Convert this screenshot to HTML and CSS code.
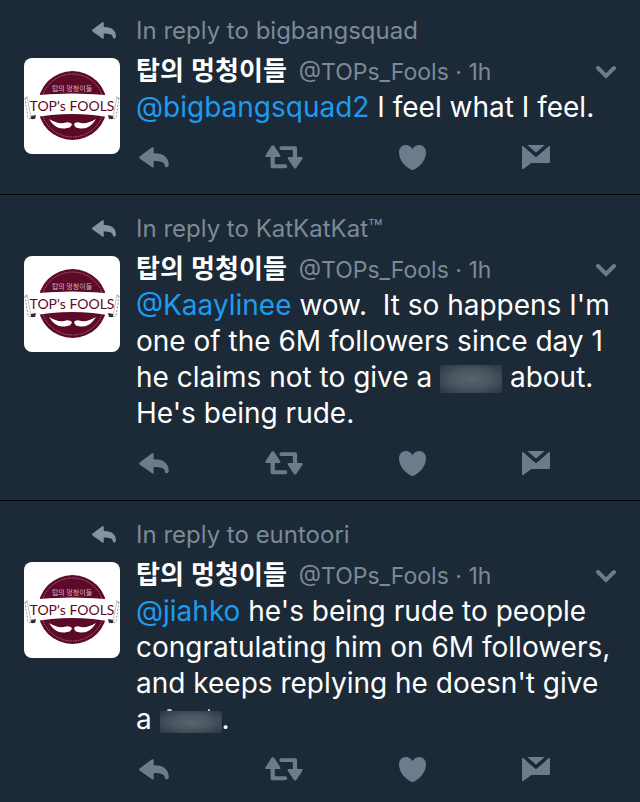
FILE: index.html
```html
<!doctype html>
<html lang="en">
  <head>
    <meta charset="UTF-8" />
    <meta name="viewport" content="width=device-width, initial-scale=1.0" />
    <title>Tweets</title>
    <link rel="stylesheet" href="styles.css">
  </head>
  <body>
    <svg class="sprite" aria-hidden="true">
      <symbol id="reply" viewBox="0 0 90 64">
        <path d="M2 28 39 1Q44-1 44 4V19C74 18 90 32 90 55Q90 62 84 62Q78 62 78 56C77 46 65 43 44 43V60Q44 65 39 62L2 36Q-2 32 2 28Z" />
      </symbol>
      <symbol id="retweet" viewBox="0 0 116 72">
        <path d="M20 2Q24-2 28 2L46 30Q49 36 43 36H30V58H62Q68 58 68 64T62 70H22Q17 70 17 65V36H5Q-1 36 2 30Z" />
        <path d="M50 3H92Q98 3 98 9V36H111Q117 36 114 42L96 69Q92 74 88 69L70 42Q67 36 73 36H85V15H50Q44 15 44 9T50 3Z" />
      </symbol>
      <symbol id="heart" viewBox="0 0 80 74">
        <path d="M40 12C45 3 52 0 60 0C72 0 80 10 80 22C80 45 60 66 44 73Q40 75 36 73C20 66 0 45 0 22C0 10 8 0 20 0C28 0 35 3 40 12Z" />
      </symbol>
      <symbol id="message" viewBox="0 0 84 72">
        <path d="M16 0H68L45 20Q42 23 39 20Z" />
        <path d="M0 4Q0 0 4 4L38 34Q42 38 46 34L80 4Q84 0 84 4V50Q84 54 80 54H28L5 71Q0 74 0 69Z" />
      </symbol>
      <symbol id="chevron" viewBox="0 0 20 14">
        <path class="stroke" d="M2 3 10 11 18 3" />
      </symbol>
      <symbol id="logo" viewBox="0 0 96 96">
        <rect width="96" height="96" fill="#fff" />
        <circle cx="48.500" cy="47.500" r="34.500" fill="#5d0928" />
        <circle cx="48.500" cy="47.500" r="31.500" fill="none" stroke="#c497a8" stroke-width="0.700" stroke-dasharray="1.500 1" />
        <text class="logo-small" x="48" y="33" text-anchor="middle">탑의 멍청이들</text>
        <path d="M1 40 8 39 9 61 4 60Z M95 40 88 39 87 61 92 60Z" fill="#fff" stroke="#777" stroke-width="0.800" stroke-dasharray="2 1.500" />
        <path d="M3 38Q48 33 93 38L89 60Q48 52 7 60Z" fill="#fff" />
        <path d="M3 38 7 60M93 38 89 60" stroke="#aaa" stroke-width="0.700" />
        <path d="M7 58 12 57 11 61 7 61ZM89 58 84 57 85 61 89 61Z" fill="#302b30" />
        <text class="logo-name" x="48" y="53" text-anchor="middle">TOP's FOOLS</text>
        <path d="M25 61Q33 66 40 65Q45 63 48 66Q47 70 43 70Q32 73 25 61ZM72 61Q64 66 57 65Q52 63 50 66Q51 70 54 70Q65 73 72 61Z" fill="#fff" />
      </symbol>
    </svg>

    <main class="timeline">
      <article class="tweet">
        <div class="context">
          <svg class="icon context-icon"><use href="#reply" /></svg>
          <span>In reply to bigbangsquad</span>
        </div>
        <svg class="avatar" role="img" aria-label="탑의 멍청이들"><use href="#logo" /></svg>
        <div class="content">
          <header class="tweet-header">
            <strong class="name" lang="ko">탑의 멍청이들</strong>
            <span class="meta">@TOPs_Fools · 1h</span>
            <button class="more" type="button" aria-label="More"><svg class="icon icon-chevron"><use href="#chevron" /></svg></button>
          </header>
          <p class="text"><a href="#">@bigbangsquad2</a> I feel what I feel.</p>
          <div class="actions">
            <button type="button" aria-label="Reply"><svg class="icon icon-reply"><use href="#reply" /></svg></button>
            <button type="button" aria-label="Retweet"><svg class="icon icon-retweet"><use href="#retweet" /></svg></button>
            <button type="button" aria-label="Like"><svg class="icon icon-heart"><use href="#heart" /></svg></button>
            <button type="button" aria-label="Message"><svg class="icon icon-message"><use href="#message" /></svg></button>
          </div>
        </div>
      </article>

      <article class="tweet">
        <div class="context">
          <svg class="icon context-icon"><use href="#reply" /></svg>
          <span>In reply to KatKatKat™</span>
        </div>
        <svg class="avatar" role="img" aria-label="탑의 멍청이들"><use href="#logo" /></svg>
        <div class="content">
          <header class="tweet-header">
            <strong class="name" lang="ko">탑의 멍청이들</strong>
            <span class="meta">@TOPs_Fools · 1h</span>
            <button class="more" type="button" aria-label="More"><svg class="icon icon-chevron"><use href="#chevron" /></svg></button>
          </header>
          <p class="text"><a href="#">@Kaaylinee</a> wow.&nbsp; It so happens I'm one of the 6M followers since day 1 he claims not to give a <span class="censored"></span> about. He's being rude.</p>
          <div class="actions">
            <button type="button" aria-label="Reply"><svg class="icon icon-reply"><use href="#reply" /></svg></button>
            <button type="button" aria-label="Retweet"><svg class="icon icon-retweet"><use href="#retweet" /></svg></button>
            <button type="button" aria-label="Like"><svg class="icon icon-heart"><use href="#heart" /></svg></button>
            <button type="button" aria-label="Message"><svg class="icon icon-message"><use href="#message" /></svg></button>
          </div>
        </div>
      </article>

      <article class="tweet">
        <div class="context">
          <svg class="icon context-icon"><use href="#reply" /></svg>
          <span>In reply to euntoori</span>
        </div>
        <svg class="avatar" role="img" aria-label="탑의 멍청이들"><use href="#logo" /></svg>
        <div class="content">
          <header class="tweet-header">
            <strong class="name" lang="ko">탑의 멍청이들</strong>
            <span class="meta">@TOPs_Fools · 1h</span>
            <button class="more" type="button" aria-label="More"><svg class="icon icon-chevron"><use href="#chevron" /></svg></button>
          </header>
          <p class="text"><a href="#">@jiahko</a> he's being rude to people congratulating him on 6M followers, and keeps replying he doesn't give <span class="nowrap">a <span class="censored short"></span>.</span></p>
          <div class="actions">
            <button type="button" aria-label="Reply"><svg class="icon icon-reply"><use href="#reply" /></svg></button>
            <button type="button" aria-label="Retweet"><svg class="icon icon-retweet"><use href="#retweet" /></svg></button>
            <button type="button" aria-label="Like"><svg class="icon icon-heart"><use href="#heart" /></svg></button>
            <button type="button" aria-label="Message"><svg class="icon icon-message"><use href="#message" /></svg></button>
          </div>
        </div>
      </article>
    </main>
  </body>
</html>
```
FILE: styles.css
```css
:root {
  --background-color: #1c2936;
  --text-color: #ffffff;
  --muted-color: #7c8a97;
  --icon-color: #6b7d8d;
  --link-color: #1d9bf0;
}

* {
  margin: 0;
  padding: 0;
  box-sizing: border-box;
}

body {
  font-family: Inter, "Noto Sans CJK KR", sans-serif;
  background-color: var(--background-color);
  color: var(--text-color);
}

.sprite {
  display: none;
}

.tweet {
  display: grid;
  grid-template-columns: 96px 1fr;
  column-gap: 16px;
  padding: 15px 24px 25px;
  border-bottom: 1px solid #000000;
}

.tweet:first-child {
  padding-top: 12px;
}

.tweet:last-child {
  padding-bottom: 21px;
  border-bottom: none;
}

.context {
  grid-column: 1 / -1;
  display: grid;
  grid-template-columns: 96px 1fr;
  column-gap: 16px;
  align-items: center;
  height: 36px;
  font-size: 24px;
  color: var(--muted-color);
}

.icon {
  display: block;
  fill: var(--icon-color);
}

.context-icon {
  width: 24px;
  height: 17px;
  margin-right: 4px;
  justify-self: end;
  fill: #8494a2;
}

.avatar {
  width: 96px;
  height: 96px;
  margin-top: 10px;
  border-radius: 8px;
}

.logo-small {
  font-family: "Noto Sans CJK KR", sans-serif;
  font-size: 7px;
  fill: #d5b3c0;
}

.logo-name {
  font-family: Lato, sans-serif;
  font-size: 14px;
  font-weight: 400;
  fill: #5d0928;
}

.tweet-header {
  display: flex;
  align-items: center;
  height: 41px;
}

.name {
  margin-right: 12px;
  font-family: "Noto Sans CJK KR", sans-serif;
  font-size: 26px;
  font-weight: 700;
  line-height: 36px;
}

.meta {
  padding-top: 6px;
  font-size: 23px;
  line-height: 36px;
  color: var(--muted-color);
}

button {
  border: none;
  background: none;
  cursor: pointer;
}

.more {
  margin-left: auto;
  padding-top: 7px;
}

.icon-chevron {
  width: 20px;
  height: 14px;
}

.stroke {
  fill: none;
  stroke: var(--icon-color);
  stroke-width: 4;
  stroke-linecap: round;
}

.text {
  font-size: 28px;
  line-height: 36px;
}

.text a {
  color: var(--link-color);
  text-decoration: none;
}

.nowrap {
  white-space: nowrap;
}

.censored {
  display: inline-block;
  position: relative;
  width: 62px;
  height: 28px;
  vertical-align: -6px;
  background:
    radial-gradient(ellipse at 50% 50%, #59636d 0%, #4b5661 45%, rgba(44, 57, 69, 0) 100%),
    #293643;
}

.censored.short {
  height: 22px;
  vertical-align: -4px;
}

/* tops of the tall letters showing above the bar */
.short::before,
.short::after {
  content: "";
  position: absolute;
  top: -2px;
  left: 7px;
  width: 5px;
  height: 2px;
  border-radius: 2px 2px 0 0;
  background-color: #c3c8cc;
}

.short::after {
  left: 48px;
  width: 2px;
}

.actions {
  display: flex;
  align-items: center;
  gap: 96px;
  height: 24px;
  margin-top: 20px;
  padding-left: 3px;
}

.icon-reply {
  width: 30px;
  height: 21px;
}

.icon-retweet {
  width: 38px;
  height: 24px;
}

.icon-heart {
  width: 27px;
  height: 25px;
}

.icon-message {
  width: 28px;
  height: 24px;
}
```
